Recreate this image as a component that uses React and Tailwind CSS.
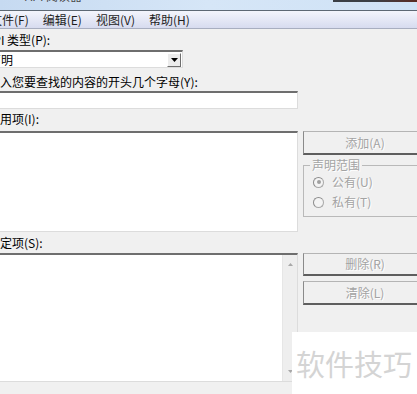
import React from 'react'

const sunken =
  'bg-white border-t-2 border-l-2 border-t-[#6e6e6e] border-l-[#6e6e6e] border-r border-b border-r-[#dcdcdc] border-b-[#dcdcdc]'

const button =
  'flex items-center justify-center w-[124px] bg-[#f0f0f0] border border-[#b4b4b4] border-l-[#8a8a8a] border-b-2 border-b-[#5e5e5e] text-[12px] text-[#a3a3a3] [text-shadow:1px_1px_0_#ffffff]'

function Radio({ checked, label }) {
  return (
    <div className="flex items-center gap-[8px] h-[14px] ml-[9px]">
      <div className="w-[11px] h-[11px] rounded-full border border-[#a8a8a8] border-l-[#8c8c8c] border-t-[#8c8c8c] bg-[#f4f4f4] flex items-center justify-center">
        {checked && <div className="w-[4px] h-[4px] rounded-full bg-[#a0a0a0]" />}
      </div>
      <span className="text-[12px] leading-[14px] text-[#a3a3a3] [text-shadow:1px_1px_0_#ffffff]">{label}</span>
    </div>
  )
}

export default function App() {
  return (
    <div
      className="relative w-[417px] h-[394px] overflow-hidden bg-[#f0f0f0] text-black"
      style={{ fontFamily: '"Noto Sans CJK SC", "Liberation Sans", sans-serif' }}
    >
      {/* title bar */}
      <div className="h-[10px] bg-gradient-to-r from-[#c6daf1] via-[#d6e6f7] to-[#cfe2f6] flex justify-between overflow-hidden">
        <span className="ml-[25px] -mt-[10px] text-[12px] leading-[12px] text-[#4a4a4a]">API 阅读器</span>
        <div className="w-[84px] h-[2px] bg-gradient-to-r from-[#3a3f46] via-[#3a3f46] to-[#5a2a22]" />
      </div>
      <div className="h-px bg-[#5d6874]" />

      {/* menu bar */}
      <div className="h-[18px] bg-gradient-to-b from-[#f3f5fc] to-[#d7dbef] border-b border-[#a8aec0] flex items-center gap-[14px] pl-px -ml-[11px] text-[12px] text-[#1e1e1e]">
        <span>文件(F)</span>
        <span>编辑(E)</span>
        <span>视图(V)</span>
        <span>帮助(H)</span>
      </div>

      {/* body */}
      <div className="flex">
        <div className="w-[311px] shrink-0 -ml-[13px] flex flex-col text-[12px]">
          <div className="mt-[4px] h-[14px] leading-[14px] -ml-[1px]">API 类型(P):</div>
          <div className={`mt-[3px] w-[196px] h-[18px] flex items-center justify-between ${sunken}`}>
            <span className="leading-[14px]">声明</span>
            <div className="w-[14px] h-[14px] mr-px bg-[#ececec] border border-[#ffffff] border-r-[#6e6e6e] border-b-[#6e6e6e] flex items-center justify-center">
              <svg width="7" height="4" viewBox="0 0 7 4">
                <path d="M0 0h7L3.5 4z" fill="#000" />
              </svg>
            </div>
          </div>
          <div className="mt-[7px] h-[14px] leading-[14px] pl-px">键入您要查找的内容的开头几个字母(Y):</div>
          <div className={`mt-[2px] h-[18px] ${sunken}`} />
          <div className="mt-[3px] h-[14px] leading-[14px] pl-px">可用项(I):</div>
          <div className={`mt-[5px] h-[101px] ${sunken}`} />
          <div className="mt-[4px] h-[14px] leading-[14px] pl-px">选定项(S):</div>
          <div className={`mt-[3px] h-[129px] flex justify-end ${sunken}`}>
            <div className="w-[15px] bg-[#eeeeee] border-l border-[#e6e6e6] flex flex-col justify-between items-center py-[8px]">
              <svg width="5" height="3" viewBox="0 0 5 3">
                <path d="M0 3h5L2.5 0z" fill="#a8a8a8" />
              </svg>
              <svg width="5" height="3" viewBox="0 0 5 3">
                <path d="M0 0h5L2.5 3z" fill="#a8a8a8" />
              </svg>
            </div>
          </div>
        </div>

        <div className="ml-[5px] shrink-0 flex flex-col">
          <div className={`mt-[102px] h-[24px] ${button}`}>添加(A)</div>
          <fieldset className="mt-[4px] w-[124px] h-[58px] border border-[#b9b9b9] pt-[4px]">
            <legend className="ml-[6px] px-[2px] text-[12px] leading-[12px] text-[#a3a3a3] [text-shadow:1px_1px_0_#ffffff]">
              声明范围
            </legend>
            <div className="flex flex-col gap-[6px]">
              <Radio checked label="公有(U)" />
              <Radio label="私有(T)" />
            </div>
          </fieldset>
          <div className={`mt-[36px] h-[23px] ${button}`}>删除(R)</div>
          <div className={`mt-[5px] h-[24px] ${button}`}>清除(L)</div>
        </div>
      </div>

      {/* watermark */}
      <div className="absolute left-[292px] top-[332px] w-[125px] h-[62px] bg-white flex items-center pl-[4px]">
        <span className="text-[29px] leading-[34px] text-[#d4d4d4]">软件技巧</span>
      </div>
    </div>
  )
}
